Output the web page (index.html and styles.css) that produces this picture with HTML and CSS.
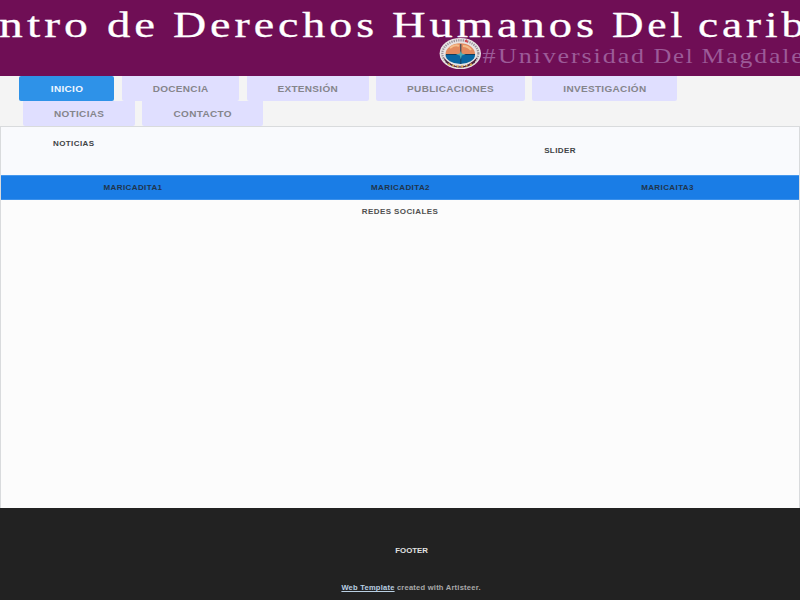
FILE: index.html
```
<!DOCTYPE html>
<html lang="es">
<head>
<meta charset="utf-8">
<title>Centro de Derechos Humanos</title>
<link rel="stylesheet" href="styles.css">
</head>
<body>
<header class="banner">
<svg width="800" height="76" viewBox="0 0 800 76">
<g class="headline">
<text x="-1" y="37" textLength="93" lengthAdjust="spacingAndGlyphs">ntro</text>
<text x="107" y="37" textLength="52" lengthAdjust="spacingAndGlyphs">de</text>
<text x="173" y="37" textLength="205" lengthAdjust="spacingAndGlyphs">Derechos</text>
<text x="392" y="37" textLength="206" lengthAdjust="spacingAndGlyphs">Humanos</text>
<text x="612" y="37" textLength="74" lengthAdjust="spacingAndGlyphs">Del</text>
<text x="698" y="37" textLength="110" lengthAdjust="spacingAndGlyphs">carib</text>
</g>
<g class="subline">
<text x="482.500" y="63" textLength="15" lengthAdjust="spacingAndGlyphs">#</text>
<text x="498" y="63" textLength="148" lengthAdjust="spacingAndGlyphs">Universidad</text>
<text x="653.500" y="63" textLength="41" lengthAdjust="spacingAndGlyphs">Del</text>
<text x="701.500" y="63" textLength="103" lengthAdjust="spacingAndGlyphs">Magdale</text>
</g>
<g>
<ellipse cx="460.300" cy="53.500" rx="20.700" ry="15.600" fill="#e9e3e3"/>
<ellipse cx="460.300" cy="53.500" rx="18" ry="13.200" fill="none" stroke="#9a929c" stroke-width="2.200" stroke-dasharray="1.300 1"/>
<path d="M465 41.500l1.500-1 1 2" stroke="#d24a50" stroke-width="1.600" fill="none"/>
<path d="M443 57q17 19 34.500 0l-3 6q-14 9-28 0z" fill="#4d2038"/>
<path d="M448 64q12 5 24 0" fill="none" stroke="#d5a44a" stroke-width="1.800" stroke-dasharray="2 2.500"/>
<path d="M445.500 54.500a14.800 11.200 0 0 1 29.600 0z" fill="#e38a5e"/>
<path d="M450 48q5-4 9-2M463 46q5 0 8 4" fill="none" stroke="#f4bd8b" stroke-width="2"/>
<path d="M445.500 54.500h29.600a14.800 9.500 0 0 1-29.600 0z" fill="#0965a0"/>
<path d="M460.800 44v20M446 54.500h29" stroke="#153d5c" stroke-width="1"/>
<path d="M460.800 51l1 2.500 4 1-4 1-1 4-1-4-4-1 4-1z" fill="#4cabb5"/>
</g>
</svg>
</header>
<nav class="menu">
<div class="row">
<a class="item active w1"><span>INICIO</span></a><a class="item w2"><span>DOCENCIA</span></a><a class="item w3"><span>EXTENSIÓN</span></a><a class="item w4"><span>PUBLICACIONES</span></a><a class="item w5"><span>INVESTIGACIÓN</span></a>
</div>
<div class="row second">
<a class="item w6"><span>NOTICIAS</span></a><a class="item w7"><span>CONTACTO</span></a>
</div>
</nav>
<main class="sheet">
<section class="top"><div class="news">NOTICIAS</div><div class="slider">SLIDER</div></section>
<section class="band"><div>MARICADITA1</div><div>MARICADITA2</div><div>MARICAITA3</div></section>
<section class="social">REDES SOCIALES</section>
</main>
<footer class="footer">
<div class="foot-title">FOOTER</div>
<p class="credit"><a>Web Template</a> created with Artisteer.</p>
</footer>
</body>
</html>
```

FILE: styles.css
```
* { box-sizing: border-box; }
body {
  margin: 0;
  width: 800px;
  height: 600px;
  overflow: hidden;
  background: #f4f4f4;
  font: bold 8px/12px "Liberation Sans", Arial, sans-serif;
  letter-spacing: 0.4px;
  color: #404346;
}
.banner { height: 76px; background: #6f0e55; overflow: hidden; }
.banner svg { display: block; }
.headline, .subline { font-family: "Liberation Serif", serif; font-weight: 400; }
.headline { font-size: 35px; letter-spacing: 3px; fill: #fff; stroke: #fff; stroke-width: 0.3px; }
.subline { font-size: 22px; letter-spacing: 1.6px; fill: #9c5b98; }
.menu { height: 50px; }
.row { display: flex; gap: 7.5px; height: 25px; padding-left: 19px; }
.second { padding-left: 23px; }
.item {
  display: flex;
  align-items: center;
  justify-content: center;
  height: 25px;
  background: #e0dfff;
  border-radius: 0 0 2px 2px;
  color: #85858b;
  font-size: 9px;
  letter-spacing: 0.3px;
}
.item span { transform: translateX(0.4px) scaleX(1.11); }
.active { background: #2e92e8; color: #eef7ff; border-radius: 2px; }
.w1 { width: 95px; }
.w2 { width: 117.500px; }
.w3 { width: 122px; }
.w4 { width: 148.500px; }
.w5 { width: 144.500px; }
.w6 { width: 111.500px; }
.w7 { width: 121px; }
.sheet {
  height: 382px;
  background: #fcfcfc;
  border: 1px solid #d9dbdd;
  border-bottom: 0;
}
.top { display: flex; height: 48px; background: #f9fafd; }
.news { width: 320px; padding: 11px 0 0 52px; }
.slider { width: 478px; padding-top: 18px; text-align: center; }
.band {
  display: grid;
  grid-template-columns: 264px 271px 263px;
  height: 25px;
  padding-top: 6px;
  background: #1a7de6;
  border-top: 1px solid #4598ee;
  border-bottom: 1px solid #3c91eb;
  color: #20344b;
  text-align: center;
}
.social { padding-top: 6px; text-align: center; color: #505050; }
.footer {
  display: flex;
  flex-direction: column;
  align-items: center;
  height: 92px;
  padding-top: 37px;
  background: #222;
  color: #e1e1e1;
}
.foot-title { margin-left: 24px; letter-spacing: 0; transform: scaleX(0.98); }
.credit {
  margin: 26px 0 0 23px;
  color: #a9a9a9;
  font-size: 6.500px;
  letter-spacing: 0.2px;
  line-height: 10px;
  transform: scaleX(1.16);
}
.credit a { color: #b9cfe2; text-decoration: underline; }
```
